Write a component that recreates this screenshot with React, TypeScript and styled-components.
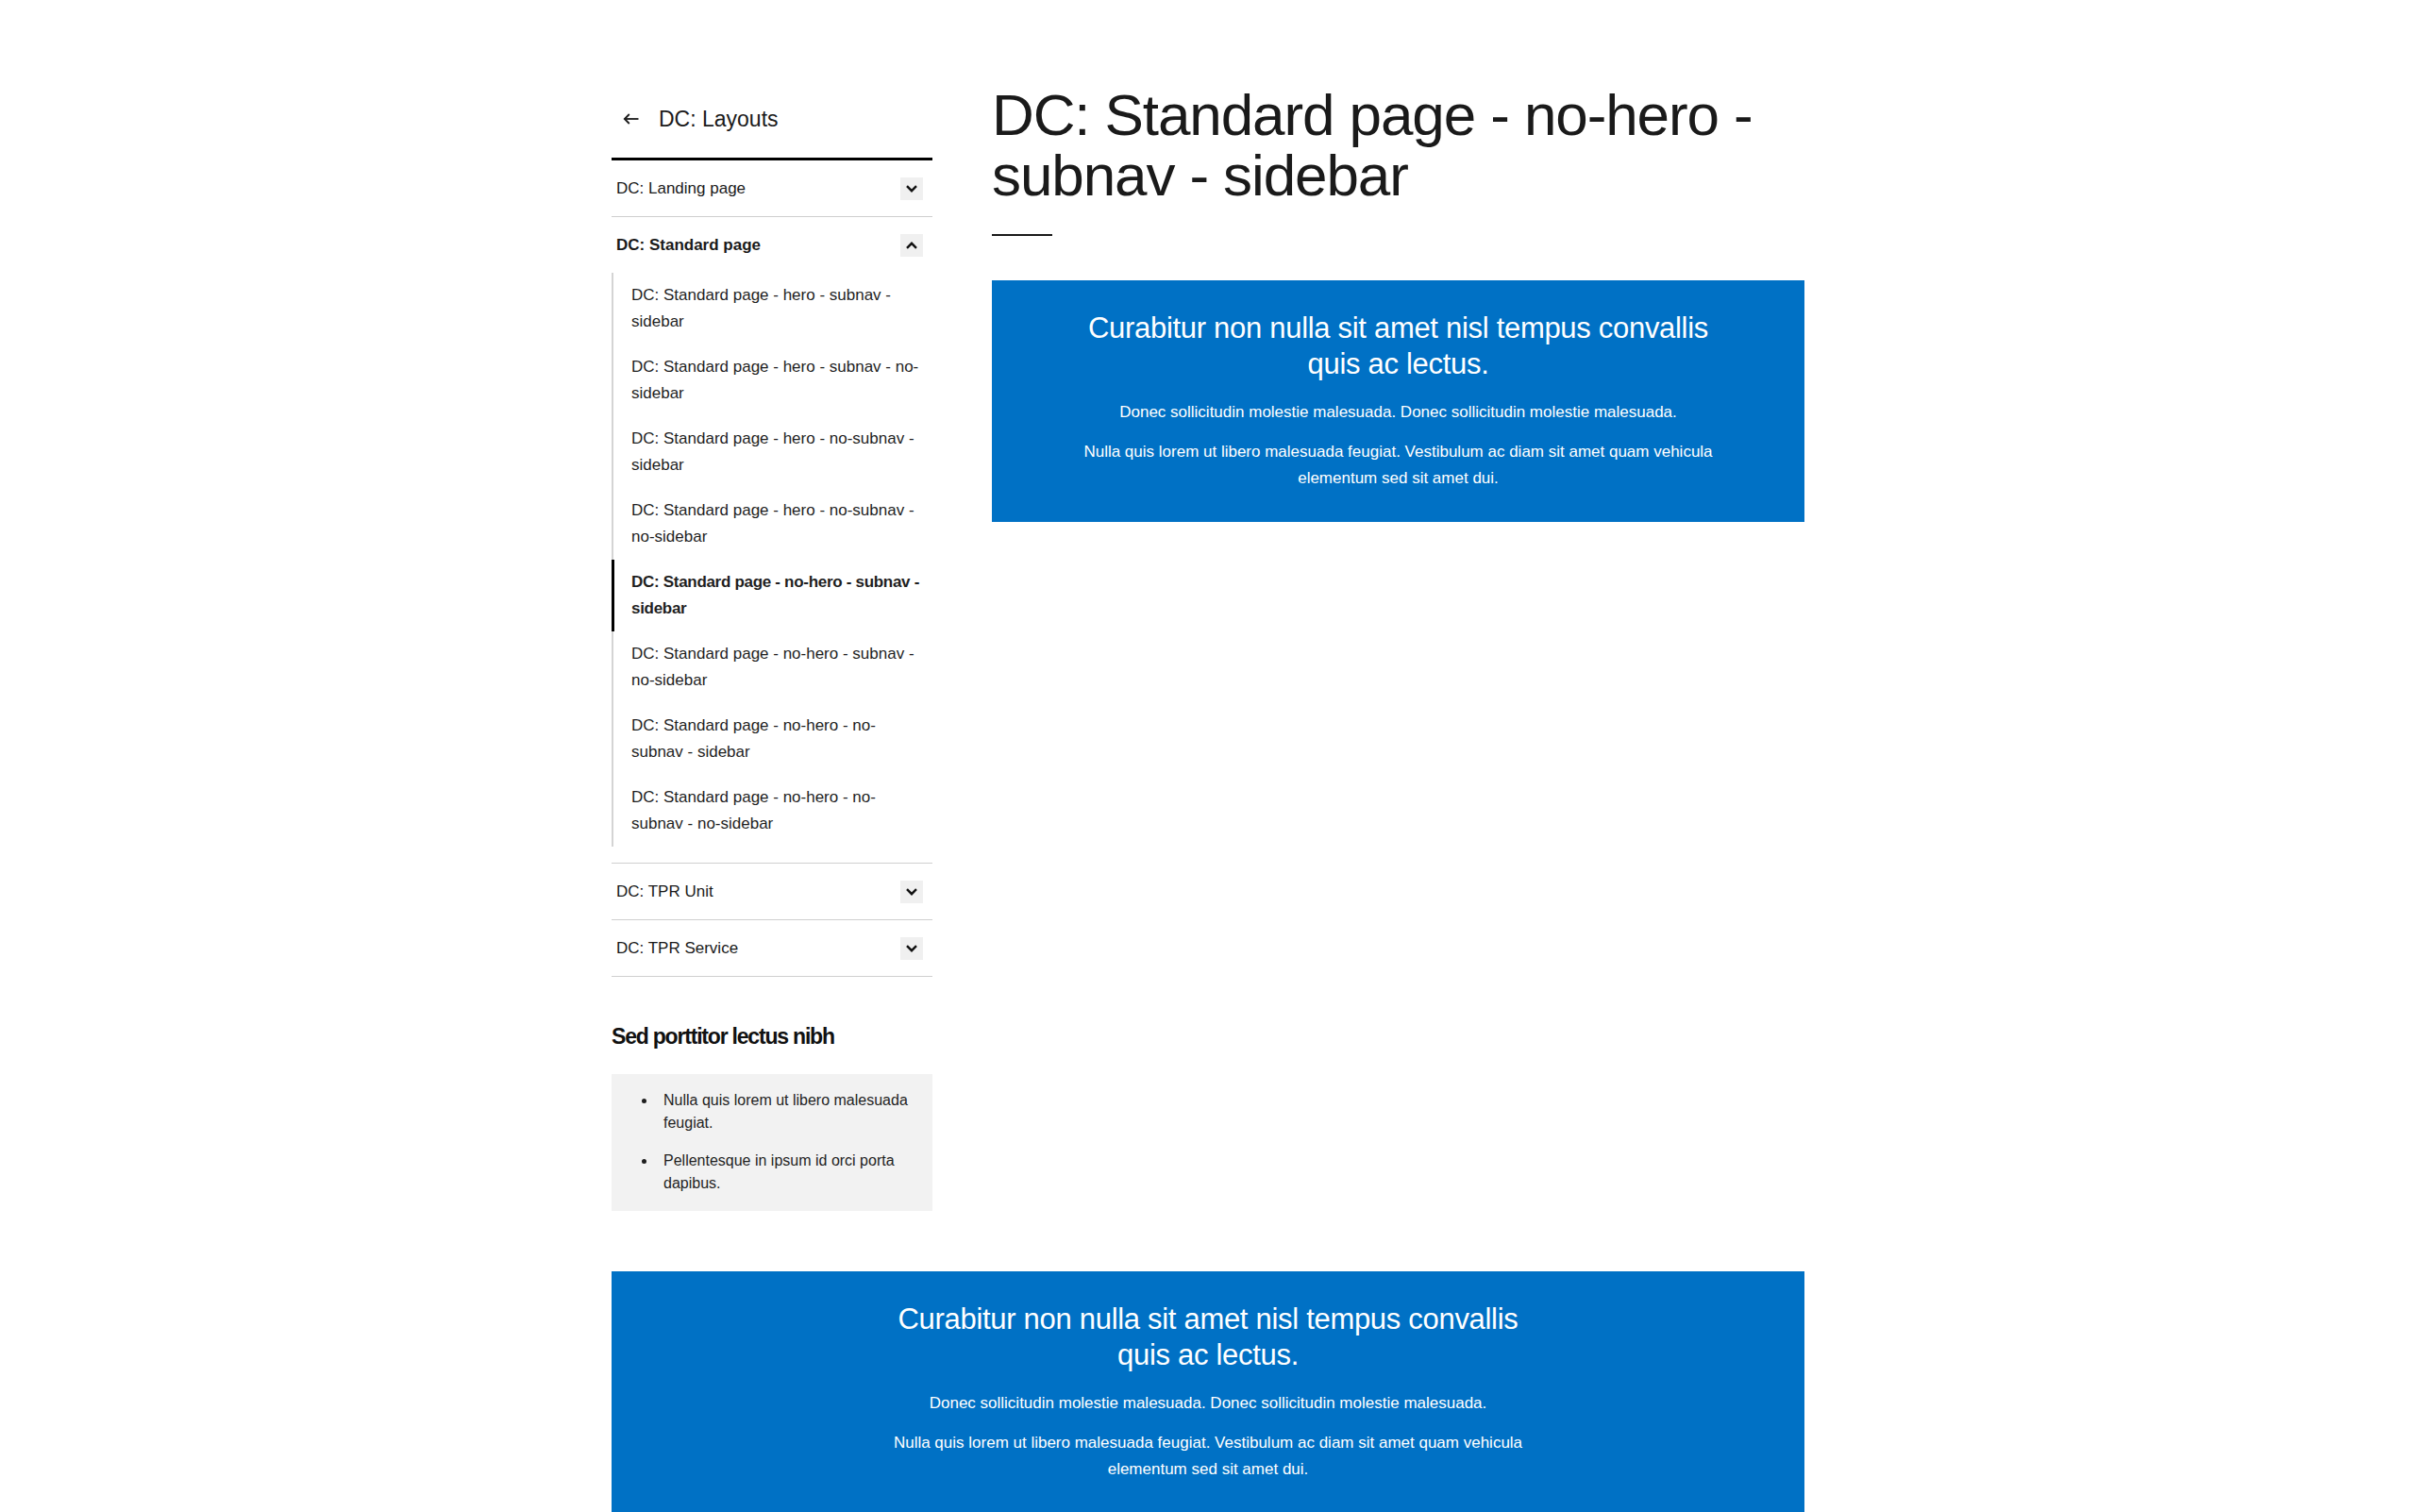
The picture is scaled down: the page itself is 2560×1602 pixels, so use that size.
import styled, { createGlobalStyle } from 'styled-components';

const GlobalStyle = createGlobalStyle`
  html, body {
    margin: 0;
    padding: 0;
    background: #ffffff;
  }
  body {
    font-family: 'Liberation Sans', Arial, sans-serif;
    color: #1a1a1a;
  }
  * {
    box-sizing: border-box;
  }
`;

const Page = styled.div`
  width: 1264px;
  margin: 0 auto;
  padding-top: 90px;
`;

const Columns = styled.div`
  display: grid;
  grid-template-columns: 340px 1fr;
  gap: 63px;
  align-items: start;
`;

const Sidebar = styled.aside`
  display: flex;
  flex-direction: column;
`;

const BackLink = styled.a`
  display: flex;
  align-items: center;
  gap: 21px;
  padding: 20px 12px 25px;
  border-bottom: 3px solid #000;
  font-size: 23px;
  line-height: 32px;
  color: #1a1a1a;
  text-decoration: none;
`;

const Section = styled.div<{ $open?: boolean }>`
  border-bottom: 1px solid #cfcfcf;
  padding-bottom: ${(p) => (p.$open ? '17px' : '0')};
`;

const SectionHeader = styled.div<{ $active?: boolean }>`
  display: flex;
  align-items: center;
  justify-content: space-between;
  height: 59px;
  padding: 0 10px 0 5px;
  font-size: 17px;
  font-weight: ${(p) => (p.$active ? 700 : 400)};
`;

const Toggle = styled.span`
  width: 24px;
  height: 24px;
  display: flex;
  align-items: center;
  justify-content: center;
  background: #f0f0f0;
`;

const SubList = styled.ul`
  list-style: none;
  margin: 0;
  padding: 0;
`;

const SubItem = styled.li<{ $active?: boolean }>`
  padding: 10px 10px 10px ${(p) => (p.$active ? '18px' : '19px')};
  border-left: ${(p) => (p.$active ? '3px solid #000' : '2px solid #d4d4d4')};
  font-size: 17px;
  line-height: 28px;
  color: #1f1f1f;
  font-weight: ${(p) => (p.$active ? 700 : 400)};
  letter-spacing: ${(p) => (p.$active ? '-0.3px' : '0')};
`;

const AsideHeading = styled.h3`
  margin: 48px 0 25px;
  font-size: 23px;
  line-height: 30px;
  font-weight: 700;
  letter-spacing: -1.2px;
  color: #111;
`;

const InfoList = styled.ul`
  margin: 0;
  padding: 16px 16px 17px 32px;
  list-style: none;
  background: #f2f2f2;
  font-size: 16px;
  line-height: 24px;
  color: #1f1f1f;
  li {
    display: flex;
  }
  li::before {
    content: '';
    flex-shrink: 0;
    width: 5px;
    height: 5px;
    margin: 10px 18px 0 0;
    border-radius: 50%;
    background: #1f1f1f;
  }
  li + li {
    margin-top: 16px;
  }
`;

const Main = styled.main`
  display: flex;
  flex-direction: column;
  align-items: flex-start;
`;

const Title = styled.h1`
  margin: 0;
  font-size: 62px;
  line-height: 64px;
  font-weight: 400;
  letter-spacing: -1.1px;
  color: #1a1a1a;
`;

const TitleRule = styled.span`
  display: block;
  width: 64px;
  height: 2px;
  margin-top: 30px;
  background: #1a1a1a;
`;

const Promo = styled.section<{ $gap: number }>`
  align-self: stretch;
  margin-top: ${(p) => p.$gap}px;
  padding: 32px;
  background: #0071c5;
  color: #ffffff;
  text-align: center;
`;

const PromoInner = styled.div`
  max-width: 700px;
  margin: 0 auto;
`;

const PromoHeading = styled.h2`
  margin: 0 0 18px;
  font-size: 31px;
  line-height: 38px;
  font-weight: 400;
  letter-spacing: -0.3px;
`;

const PromoText = styled.p`
  margin: 0;
  font-size: 17px;
  line-height: 28px;
  & + & {
    margin-top: 14px;
  }
`;

function ArrowLeft() {
  return (
    <svg width="17" height="12" viewBox="0 0 17 12" fill="none">
      <path d="M16.5 6H1.8" stroke="#1a1a1a" strokeWidth="1.8" />
      <path d="M6.8 1L1.8 6L6.8 11" stroke="#1a1a1a" strokeWidth="1.8" />
    </svg>
  );
}

function Chevron({ up }: { up?: boolean }) {
  return (
    <svg width="12" height="8" viewBox="0 0 12 8" fill="none">
      <path
        d={up ? 'M1 6.8L6 1.8L11 6.8' : 'M1 1.2L6 6.2L11 1.2'}
        stroke="#111"
        strokeWidth="2.4"
      />
    </svg>
  );
}

const subPages = [
  'DC: Standard page - hero - subnav - sidebar',
  'DC: Standard page - hero - subnav - no-sidebar',
  'DC: Standard page - hero - no-subnav - sidebar',
  'DC: Standard page - hero - no-subnav - no-sidebar',
  'DC: Standard page - no-hero - subnav - sidebar',
  'DC: Standard page - no-hero - subnav - no-sidebar',
  'DC: Standard page - no-hero - no-subnav - sidebar',
  'DC: Standard page - no-hero - no-subnav - no-sidebar',
];

const current = 'DC: Standard page - no-hero - subnav - sidebar';

function PromoBlock({ gap }: { gap: number }) {
  return (
    <Promo $gap={gap}>
      <PromoInner>
        <PromoHeading>Curabitur non nulla sit amet nisl tempus convallis quis ac lectus.</PromoHeading>
        <PromoText>Donec sollicitudin molestie malesuada. Donec sollicitudin molestie malesuada.</PromoText>
        <PromoText>
          Nulla quis lorem ut libero malesuada feugiat. Vestibulum ac diam sit amet quam vehicula elementum sed
          sit amet dui.
        </PromoText>
      </PromoInner>
    </Promo>
  );
}

function App() {
  return (
    <>
      <GlobalStyle />
      <Page>
        <Columns>
          <Sidebar>
            <BackLink href="#">
              <ArrowLeft />
              DC: Layouts
            </BackLink>
            <Section>
              <SectionHeader>
                DC: Landing page
                <Toggle>
                  <Chevron />
                </Toggle>
              </SectionHeader>
            </Section>
            <Section $open>
              <SectionHeader $active>
                DC: Standard page
                <Toggle>
                  <Chevron up />
                </Toggle>
              </SectionHeader>
              <SubList>
                {subPages.map((name) => (
                  <SubItem key={name} $active={name === current}>
                    {name}
                  </SubItem>
                ))}
              </SubList>
            </Section>
            <Section>
              <SectionHeader>
                DC: TPR Unit
                <Toggle>
                  <Chevron />
                </Toggle>
              </SectionHeader>
            </Section>
            <Section>
              <SectionHeader>
                DC: TPR Service
                <Toggle>
                  <Chevron />
                </Toggle>
              </SectionHeader>
            </Section>
            <AsideHeading>Sed porttitor lectus nibh</AsideHeading>
            <InfoList>
              <li>Nulla quis lorem ut libero malesuada feugiat.</li>
              <li>Pellentesque in ipsum id orci porta dapibus.</li>
            </InfoList>
          </Sidebar>
          <Main>
            <Title>DC: Standard page - no-hero - subnav - sidebar</Title>
            <TitleRule />
            <PromoBlock gap={47} />
          </Main>
        </Columns>
        <PromoBlock gap={64} />
      </Page>
    </>
  );
}

export default App;
